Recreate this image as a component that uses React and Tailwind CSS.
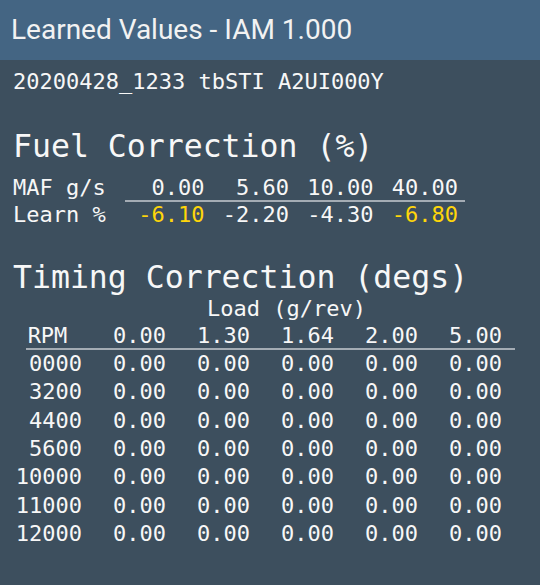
const fuelHeader = ["0.00", "5.60", "10.00", "40.00"];
const fuelLearn = [
  { v: "-6.10", warn: true },
  { v: "-2.20", warn: false },
  { v: "-4.30", warn: false },
  { v: "-6.80", warn: true },
];
const loads = ["0.00", "1.30", "1.64", "2.00", "5.00"];
const rpms = ["0000", "3200", "4400", "5600", "10000", "11000", "12000"];

const App = () => {
  return (
    <div className="w-[540px] h-[585px] bg-[#3d4f5e] text-[#f7f7f7] font-['DejaVu_Sans_Mono',monospace] overflow-hidden">
      <div className="h-[60px] bg-[#446583] pl-[11px] pt-[14px] font-['Roboto',sans-serif] text-[28px] leading-[32px] text-[#f2f2f2]">
        Learned Values - IAM 1.000
      </div>

      <div className="pl-[13px] pt-[8px]">
        <div className="text-[22px] leading-[28px] whitespace-pre">20200428_1233 tbSTI A2UI000Y</div>

        <h2 className="mt-[31.6px] text-[31.5px] leading-[36px] whitespace-pre">Fuel Correction (%)</h2>

        <div className="mt-[11.6px] text-[22px]">
          <div className="grid grid-cols-[108.5px_repeat(4,84.5px)] leading-[25px]">
            <div className="whitespace-pre">MAF g/s</div>
            {fuelHeader.map((v) => (
              <div key={v} className="text-right pr-[1.5px]">{v}</div>
            ))}
          </div>
          <div className="ml-[112px] w-[340px] h-[2px] bg-[#a4acb4]" />
          <div className="grid grid-cols-[108.5px_repeat(4,84.5px)] leading-[26px]">
            <div className="whitespace-pre">Learn %</div>
            {fuelLearn.map((c, i) => (
              <div key={i} className={`text-right pr-[1.5px] ${c.warn ? "text-[#ffd60a]" : ""}`}>
                {c.v}
              </div>
            ))}
          </div>
        </div>

        <h2 className="mt-[30.9px] text-[31.5px] leading-[36px] whitespace-pre">Timing Correction (degs)</h2>

        <div className="text-[22px]">
          <div className="ml-[194px] leading-[28px] whitespace-pre">Load (g/rev)</div>
          <div className="grid grid-cols-[69px_repeat(5,84px)] leading-[25px]">
            <div className="text-center">RPM</div>
            {loads.map((v) => (
              <div key={v} className="text-right">{v}</div>
            ))}
          </div>
          <div className="ml-[13px] w-[489px] h-[2px] bg-[#a4acb4]" />
          {rpms.map((r) => (
            <div key={r} className="grid grid-cols-[69px_repeat(5,84px)] leading-[28.3px]">
              <div className="text-right">{r}</div>
              {loads.map((_, i) => (
                <div key={i} className="text-right">0.00</div>
              ))}
            </div>
          ))}
        </div>
      </div>
    </div>
  );
};

export default App;
